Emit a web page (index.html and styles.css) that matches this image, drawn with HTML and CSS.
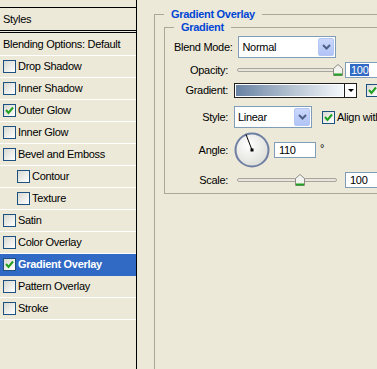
FILE: index.html
```html
<!DOCTYPE html>
<html>
<head>
  <meta charset="UTF-8">
  <meta name="viewport" content="width=device-width, initial-scale=1.0">
  <title>Layer Style</title>
  <link rel="stylesheet" href="styles.css">
</head>
<body>
  <div class="dialog">
    <ul class="style-list">
      <li class="list-head">Styles</li>
      <li class="item item-blend">Blending Options: Default</li>
      <li class="item"><span class="check"></span>Drop Shadow</li>
      <li class="item"><span class="check"></span>Inner Shadow</li>
      <li class="item"><span class="check"><svg width="11" height="11" viewBox="0 0 11 11"><path d="M2 5 L4.5 8 L9 2.5" fill="none" stroke="#21a121" stroke-width="2"/></svg></span>Outer Glow</li>
      <li class="item"><span class="check"></span>Inner Glow</li>
      <li class="item"><span class="check"></span>Bevel and Emboss</li>
      <li class="item item-sub"><span class="check"></span>Contour</li>
      <li class="item item-sub"><span class="check"></span>Texture</li>
      <li class="item"><span class="check"></span>Satin</li>
      <li class="item"><span class="check"></span>Color Overlay</li>
      <li class="item active"><span class="check"><svg width="11" height="11" viewBox="0 0 11 11"><path d="M2 5 L4.5 8 L9 2.5" fill="none" stroke="#21a121" stroke-width="2"/></svg></span>Gradient Overlay</li>
      <li class="item"><span class="check"></span>Pattern Overlay</li>
      <li class="item"><span class="check"></span>Stroke</li>
    </ul>

    <div class="settings">
      <fieldset class="group">
        <legend>Gradient Overlay</legend>
        <fieldset class="group-inner">
          <legend>Gradient</legend>

          <div class="row row-blend">
            <span class="label">Blend Mode:</span>
            <div class="select select-wide">
              <span>Normal</span>
              <span class="drop"><svg width="9" height="6" viewBox="0 0 9 6"><path d="M1 1 L4.5 4.5 L8 1" fill="none" stroke="#4d6185" stroke-width="2"/></svg></span>
            </div>
          </div>

          <div class="row row-opacity">
            <span class="label">Opacity:</span>
            <div class="slider">
              <div class="track"></div>
              <svg class="thumb" style="left: 96px" width="10" height="12" viewBox="0 0 10 12"><path d="M5 0.5 L9.5 4.5 V11.5 H0.5 V4.5 Z" fill="#f3f3ef" stroke="#8c8c86"/><rect x="1" y="9.5" width="8" height="2" fill="#21a121"/></svg>
            </div>
            <span class="field"><span class="selected">100</span></span>
          </div>

          <div class="row row-gradient">
            <span class="label">Gradient:</span>
            <div class="gradient-picker">
              <span class="gradient-swatch"></span>
              <span class="gradient-drop"><span class="arrow"></span></span>
            </div>
            <span class="check check-side"><svg width="11" height="11" viewBox="0 0 11 11"><path d="M2 5 L4.5 8 L9 2.5" fill="none" stroke="#21a121" stroke-width="2"/></svg></span>
          </div>

          <div class="row row-style">
            <span class="label">Style:</span>
            <div class="select select-narrow">
              <span>Linear</span>
              <span class="drop"><svg width="9" height="6" viewBox="0 0 9 6"><path d="M1 1 L4.5 4.5 L8 1" fill="none" stroke="#4d6185" stroke-width="2"/></svg></span>
            </div>
            <span class="check check-align"><svg width="11" height="11" viewBox="0 0 11 11"><path d="M2 5 L4.5 8 L9 2.5" fill="none" stroke="#21a121" stroke-width="2"/></svg></span>
            <span>Align with</span>
          </div>

          <div class="row row-angle">
            <span class="label">Angle:</span>
            <svg class="dial" width="36" height="36" viewBox="0 0 36 36">
              <defs>
                <radialGradient id="dialFill" cx="40%" cy="35%" r="70%">
                  <stop offset="0" stop-color="#ffffff"/>
                  <stop offset="1" stop-color="#dcdcd6"/>
                </radialGradient>
              </defs>
              <circle cx="18" cy="18" r="16.5" fill="url(#dialFill)" stroke="#6f7fa3" stroke-width="2"/>
              <line x1="18" y1="18" x2="12" y2="2.5" stroke="#000" stroke-width="1"/>
              <rect x="16.5" y="16.5" width="3" height="3" fill="#000"/>
            </svg>
            <span class="field field-angle">110</span>
            <span class="degree">°</span>
          </div>

          <div class="row row-scale">
            <span class="label">Scale:</span>
            <div class="slider">
              <div class="track"></div>
              <svg class="thumb" style="left: 58px" width="10" height="12" viewBox="0 0 10 12"><path d="M5 0.5 L9.5 4.5 V11.5 H0.5 V4.5 Z" fill="#f3f3ef" stroke="#8c8c86"/><rect x="1" y="9.5" width="8" height="2" fill="#21a121"/></svg>
            </div>
            <span class="field">100</span>
          </div>
        </fieldset>
      </fieldset>
    </div>
  </div>
</body>
</html>
```

FILE: styles.css
```css
body {
  margin: 0;
  width: 377px;
  height: 369px;
  overflow: hidden;
  font: 11px/13px "Liberation Sans", Arial, sans-serif;
  letter-spacing: -0.3px;
  color: #000;
  background: #ece9d8;
}

.dialog {
  display: flex;
  height: 100%;
}

/* left: list of effects */

.style-list {
  margin: 0;
  padding: 0;
  flex: 0 0 136px;
  list-style: none;
  border-right: 1px solid #000;
}

.list-head {
  margin-top: 7px;
  height: 17px;
  padding: 5px 0 0 3px;
  border-top: 1px solid #000;
  border-bottom: 3px double #000;
}

.item {
  height: 21px;
  padding-left: 3px;
  line-height: 21px;
  white-space: nowrap;
  border-bottom: 1px solid #fff;
}

  .item-blend {
    height: 22px;
    line-height: 22px;
  }

  .item-sub {
    padding-left: 17px;
  }

  .item.active {
    color: #fff;
    font-weight: 700;
    background: #316ac5;
    border-bottom-color: #316ac5;
  }

.check {
  margin: -2px 2px 0 0;
  display: inline-block;
  width: 11px;
  height: 11px;
  vertical-align: middle;
  border: 1px solid #1c5180;
  background: linear-gradient(135deg, #d8d8d2, #fff);
}

  .check svg {
    display: block;
  }

/* right: settings */

.settings {
  flex: none;
  width: 300px;
  padding-left: 17px;
}

.group {
  margin: 8px 0 0;
  padding: 0 0 0 9px;
  min-height: 380px;
  border: 1px solid #aca899;
}

.group-inner {
  margin: 0;
  padding: 2px 0 5px 9px;
  border: 1px solid #aca899;
}

legend {
  padding: 0 7px;
  color: #0046d5;
  font-weight: 700;
}

.row {
  display: flex;
  align-items: center;
  white-space: nowrap;
}

.label {
  margin-right: 6px;
  flex: 0 0 54px;
  text-align: right;
}

.row-blend { height: 22px; }
.row-opacity { margin-top: 4px; height: 16px; }
.row-gradient { margin-top: 4px; height: 16px; }
.row-style { margin-top: 8px; height: 22px; }
.row-angle { margin-top: 4px; height: 36px; }
.row-scale { margin-top: 4px; height: 16px; }

.select {
  box-sizing: border-box;
  display: flex;
  align-items: center;
  justify-content: space-between;
  height: 22px;
  padding: 1px 1px 1px 3px;
  border: 1px solid #7f9db9;
  background: #fff;
}

.select-wide { width: 98px; }
.select-narrow { width: 78px; }

.drop {
  box-sizing: border-box;
  display: flex;
  align-items: center;
  justify-content: center;
  align-self: stretch;
  width: 16px;
  border: 1px solid #b4c6f3;
  border-radius: 2px;
  background: linear-gradient(#cbd8fc, #b1c3f6);
}

.slider {
  margin: 0 8px 0 3px;
  position: relative;
  display: flex;
  align-items: center;
  width: 100px;
  height: 16px;
}

.track {
  box-sizing: border-box;
  width: 100%;
  height: 4px;
  border: 1px solid #a8a69c;
  border-radius: 2px;
  background: #e8e6dc;
}

.thumb {
  position: absolute;
  top: 2px;
}

.field {
  box-sizing: border-box;
  display: inline-block;
  width: 32px;
  height: 16px;
  padding: 0 4px;
  line-height: 14px;
  border: 1px solid #7f9db9;
  border-right: 0;
  background: #fff;
}

  .field-angle {
    margin-left: 4px;
    width: 42px;
    border-right: 1px solid #7f9db9;
  }

.selected {
  padding: 0 1px;
  color: #fff;
  background: #316ac5;
}

.degree {
  margin: -3px 0 0 4px;
}

.gradient-picker {
  box-sizing: border-box;
  display: flex;
  width: 123px;
  height: 15px;
  border: 1px solid #1e1e1e;
  background: #fff;
}

.gradient-swatch {
  margin: 1px;
  flex: 1 1 0%;
  background: linear-gradient(90deg, #6882a3, #b9c6d4 55%, #f4f8fb);
}

.gradient-drop {
  display: flex;
  align-items: center;
  justify-content: center;
  width: 11px;
  border-left: 1px solid #1e1e1e;
}

.arrow {
  border-top: 3px solid #000;
  border-left: 3px solid transparent;
  border-right: 3px solid transparent;
}

.check-side {
  margin: 0 0 0 9px;
  flex: none;
}

.check-align {
  margin: 0 2px 0 10px;
  flex: none;
}
```
